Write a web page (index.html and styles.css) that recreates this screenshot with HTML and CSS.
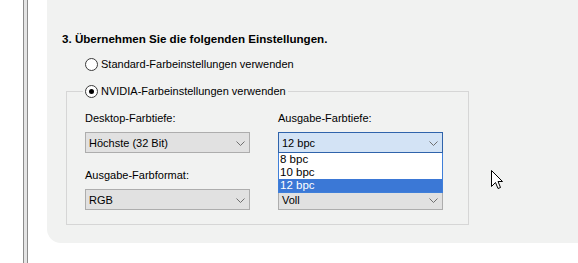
FILE: index.html
```html
<!DOCTYPE html>
<html lang="de">
<head>
  <meta charset="UTF-8">
  <title>NVIDIA Systemsteuerung – Farbeinstellungen</title>
  <link rel="stylesheet" href="styles.css">
</head>
<body>
  <div class="page">
    <div class="gutter"></div>
    <div class="rule"></div>
    <div class="gap"></div>

    <main class="panel">
      <h3 class="step">3. Übernehmen Sie die folgenden Einstellungen.</h3>

      <label class="radio-row">
        <span class="radio"></span>
        <span>Standard-Farbeinstellungen verwenden</span>
      </label>

      <fieldset class="group">
        <legend>
          <label class="radio-row">
            <span class="radio checked"></span>
            <span>NVIDIA-Farbeinstellungen verwenden</span>
          </label>
        </legend>

        <div class="grid">
          <div class="field">
            <div class="field-label">Desktop-Farbtiefe:</div>
            <div class="combo">
              <span>Höchste (32 Bit)</span>
              <svg class="chev" width="9" height="5" viewBox="0 0 9 5"><path d="M0.5 0.5 L4.5 4.5 L8.5 0.5" fill="none" stroke="#6f6f6f"/></svg>
            </div>
          </div>
          <div class="field">
            <div class="field-label">Ausgabe-Farbtiefe:</div>
            <div class="combo-wrap">
              <div class="combo focused">
                <span>12 bpc</span>
                <svg class="chev" width="9" height="5" viewBox="0 0 9 5"><path d="M0.5 0.5 L4.5 4.5 L8.5 0.5" fill="none" stroke="#6f6f6f"/></svg>
              </div>
              <ul class="dropdown">
                <li>8 bpc</li>
                <li>10 bpc</li>
                <li class="selected">12 bpc</li>
              </ul>
            </div>
          </div>
          <div class="field">
            <div class="field-label">Ausgabe-Farbformat:</div>
            <div class="combo">
              <span>RGB</span>
              <svg class="chev" width="9" height="5" viewBox="0 0 9 5"><path d="M0.5 0.5 L4.5 4.5 L8.5 0.5" fill="none" stroke="#6f6f6f"/></svg>
            </div>
          </div>
          <div class="field">
            <div class="field-label empty"></div>
            <div class="combo">
              <span>Voll</span>
              <svg class="chev" width="9" height="5" viewBox="0 0 9 5"><path d="M0.5 0.5 L4.5 4.5 L8.5 0.5" fill="none" stroke="#6f6f6f"/></svg>
            </div>
          </div>
        </div>
      </fieldset>

      <svg class="cursor" width="12" height="20" viewBox="0 0 12 20">
        <path d="M0.5 0.5 L0.5 16.5 L4.5 12.5 L7 18.5 L9.5 17.5 L7 11.5 L11.5 11.5 Z" fill="#fff" stroke="#000" stroke-linejoin="miter"/>
      </svg>
    </main>
  </div>
</body>
</html>
```

FILE: styles.css
```css
:root {
  --panel-bg: #f1f2f1;
  --text: #000;
  --combo-bg: #e1e1e1;
  --combo-border: #adadad;
  --focus-bg: #d3e3f5;
  --focus-border: #2f63ab;
  --list-border: #3f7fd9;
  --select-blue: #3b78d6;
}
* { box-sizing: border-box; }
body {
  margin: 0;
  background: #fff;
  font-family: "Liberation Sans", Arial, sans-serif;
  font-size: 11px;
  color: var(--text);
}
.page { display: flex; height: 263px; }
.gutter { width: 23px; }
.rule {
  width: 5px;
  background: #e4e4e4;
  border-left: 1px solid #8c8c8c;
  border-right: 1px solid #8c8c8c;
}
.gap { width: 19px; }
.panel {
  position: relative;
  flex: 1;
  height: 243px;
  background: var(--panel-bg);
  border-bottom-left-radius: 14px;
  padding: 31px 0 0 15px;
}
.step { margin: 0 0 11px; font-size: 11.6px; line-height: 15px; font-weight: bold; }
.radio-row { display: flex; align-items: center; gap: 3px; line-height: 15px; }
.panel > .radio-row { margin-left: 23px; }
.radio {
  width: 13px; height: 13px;
  border: 1px solid #3a3a3a;
  border-radius: 50%;
  background: #fff;
  display: flex; align-items: center; justify-content: center;
}
.radio.checked::after {
  content: "";
  width: 5px; height: 5px;
  border-radius: 50%;
  background: #000;
}
.group {
  margin: 12px 0 0 4px;
  width: 403px;
  border: 1px solid #d6d6d6;
  padding: 12px 25px 14px 18px;
}
.group legend { padding: 0 2px; margin-left: -2px; }
.grid {
  display: grid;
  grid-template-columns: 165px 165px;
  column-gap: 28px;
  row-gap: 15px;
}
.field-label { height: 15px; line-height: 15px; margin: 0 0 6px; }
.combo-wrap { position: relative; }
.combo {
  height: 21px;
  border: 1px solid var(--combo-border);
  background: var(--combo-bg);
  display: flex; align-items: center; justify-content: space-between;
  padding: 0 4px 0 3px;
}
.combo.focused { background: var(--focus-bg); border-color: var(--focus-border); }
.chev { margin-top: 1px; }
.dropdown {
  position: absolute;
  left: 0; top: 21px;
  width: 165px;
  margin: 0; padding: 0;
  list-style: none;
  background: #fff;
  border: 1px solid var(--list-border);
  border-top: none;
  z-index: 1;
}
.dropdown li { height: 13px; line-height: 13px; padding: 0 1px; font-size: 11.5px; }
.dropdown li.selected { background: var(--select-blue); color: #fff; }
.cursor { position: absolute; left: 444px; top: 170px; }
```
